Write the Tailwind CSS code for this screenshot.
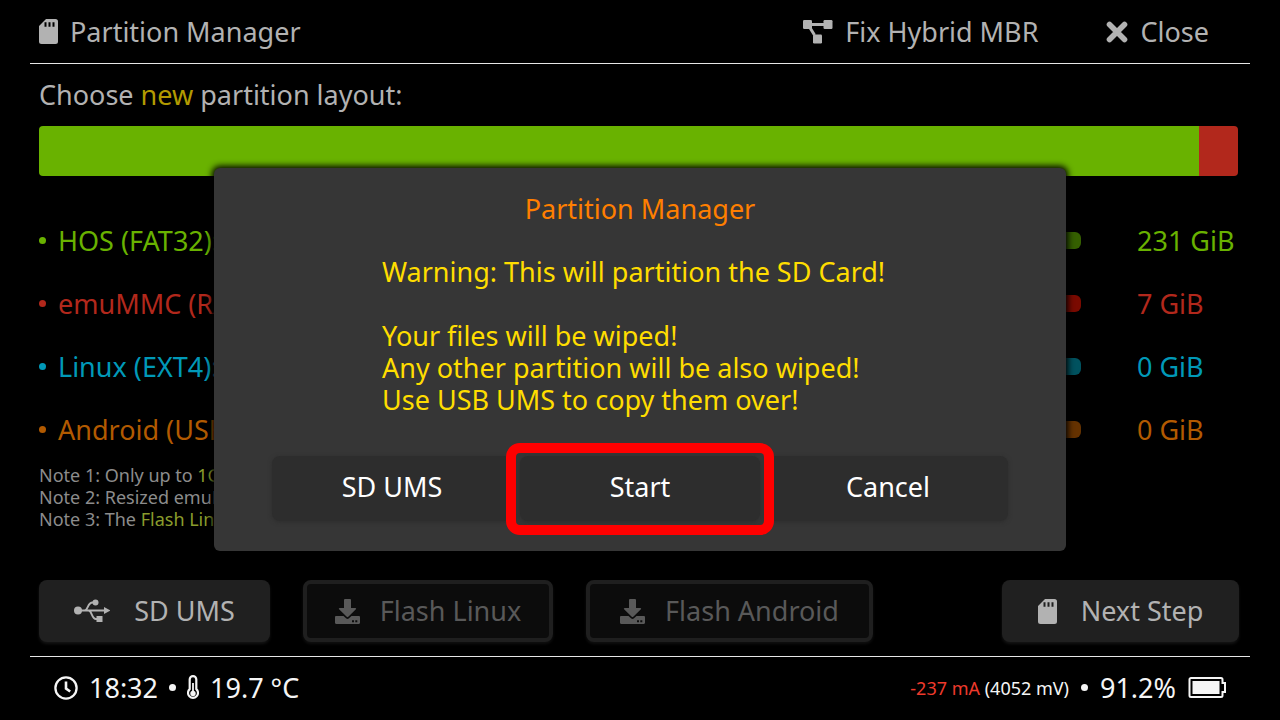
<!DOCTYPE html>
<html lang="en">
<head>
<meta charset="utf-8">
<meta name="viewport" content="width=device-width, initial-scale=1">
<title>Partition Manager</title>
<script src="https://cdn.jsdelivr.net/npm/@tailwindcss/browser@4"></script>
</head>
<body class="bg-black">
<svg class="hidden" aria-hidden="true">
  <symbol id="sd" viewBox="0 0 19 25"><path fill="currentColor" fill-rule="evenodd" d="M7 0h9.500a2.500 2.500 0 0 1 2.500 2.500v20a2.500 2.500 0 0 1-2.500 2.500h-14A2.500 2.500 0 0 1 0 22.500V7zM5.500 3.200v4.600h2V3.200zM9.500 3.200v4.600h2V3.200zM13.500 3.200v4.600h2V3.200z"/></symbol>
  <symbol id="download" viewBox="0 0 25 25"><path fill="currentColor" d="M10 0h5a1 1 0 0 1 1 1v8h4.300c.8 0 1.100.8.600 1.300l-7.600 7.500c-.5.500-1.100.5-1.600 0l-7.600-7.500C3.600 9.800 3.900 9 4.700 9H9V1a1 1 0 0 1 1-1z"/><path fill="currentColor" fill-rule="evenodd" d="M1.200 17h7.300l2.500 2.300c1 .9 2 .9 3 0l2.500-2.300h7.300c.7 0 1.200.5 1.200 1.200v5.600c0 .7-.5 1.200-1.200 1.200H1.200C.5 25 0 24.500 0 23.800v-5.600C0 17.500.5 17 1.200 17zM17 21.300v2h2v-2zM20.300 21.300v2h2v-2z"/></symbol>
</svg>
<div class="relative flex min-h-screen flex-col px-[30px] font-['Noto_Sans','Noto_Sans_CJK_JP',sans-serif] text-[27px] leading-8 font-normal text-[#b2b2b2]">

  <header class="flex h-16 items-center border-b border-[#e6e6e6] pr-[41px] pl-[9px] whitespace-nowrap">
    <h1 class="flex items-center gap-3">
      <svg class="h-[25px] w-[19px]"><use href="#sd"/></svg>Partition Manager
    </h1>
    <div class="ml-auto flex items-center gap-[68px]">
      <button type="button" class="flex items-center gap-3">
        <svg class="h-6 w-[30px]" viewBox="0 0 30 24"><g fill="currentColor"><rect width="9" height="9" rx="1.200"/><rect x="20.500" width="9" height="9" rx="1.200"/><rect x="10" y="14.500" width="9" height="9" rx="1.200"/></g><path d="M8 4.500h14M6.500 7l5 8" fill="none" stroke="currentColor" stroke-width="3"/></svg>
        Fix Hybrid MBR
      </button>
      <button type="button" class="flex items-center gap-3">
        <svg class="h-[22px] w-[22px]" viewBox="0 0 22 22"><path d="M3.500 3.500l15 15M18.500 3.500l-15 15" stroke="currentColor" stroke-width="5.600" stroke-linecap="round"/></svg>
        Close
      </button>
    </div>
  </header>

  <main class="flex grow flex-col pr-3 pl-[9px]">
    <p class="py-[15px]">Choose <span class="text-[#b29a00]">new</span> partition layout:</p>
    <div class="flex h-[50px] overflow-hidden rounded">
      <div class="grow bg-[#69b200]"></div>
      <div class="w-[39px] bg-[#b2281c]"></div>
    </div>

    <div class="mt-[33px]">
      <div class="flex h-[63px] items-center whitespace-nowrap text-[#69b200]">
        <label for="hos" class="flex w-[360px] items-center gap-3"><span class="size-[7px] rounded-full bg-current"></span>HOS (FAT32):</label>
        <input id="hos" type="range" min="0" max="238" value="100" class="h-[17px] min-w-0 grow appearance-none rounded-md bg-[#356000] [&::-webkit-slider-thumb]:size-[17px] [&::-webkit-slider-thumb]:appearance-none [&::-webkit-slider-thumb]:rounded-md [&::-webkit-slider-thumb]:bg-[#69b200]">
        <output for="hos" class="ml-14 w-[101px]">231 GiB</output>
      </div>
      <div class="flex h-[63px] items-center whitespace-nowrap text-[#b2281c]">
        <label for="emu" class="flex w-[360px] items-center gap-3"><span class="size-[7px] rounded-full bg-current"></span>emuMMC (RAW):</label>
        <input id="emu" type="range" min="0" max="238" value="7" class="h-[17px] min-w-0 grow appearance-none rounded-md bg-[#7a0a00] [&::-webkit-slider-thumb]:size-[17px] [&::-webkit-slider-thumb]:appearance-none [&::-webkit-slider-thumb]:rounded-md [&::-webkit-slider-thumb]:bg-[#b2281c]">
        <output for="emu" class="ml-14 w-[101px]">7 GiB</output>
      </div>
      <div class="flex h-[63px] items-center whitespace-nowrap text-[#0099b8]">
        <label for="linux" class="flex w-[360px] items-center gap-3"><span class="size-[7px] rounded-full bg-current"></span>Linux (EXT4):</label>
        <input id="linux" type="range" min="0" max="238" value="0" class="h-[17px] min-w-0 grow appearance-none rounded-md bg-[#00525f] [&::-webkit-slider-thumb]:size-[17px] [&::-webkit-slider-thumb]:appearance-none [&::-webkit-slider-thumb]:rounded-md [&::-webkit-slider-thumb]:bg-[#0099b8]">
        <output for="linux" class="ml-14 w-[101px]">0 GiB</output>
      </div>
      <div class="flex h-[63px] items-center whitespace-nowrap text-[#b25a00]">
        <label for="android" class="flex w-[360px] items-center gap-3"><span class="size-[7px] rounded-full bg-current"></span>Android (USER):</label>
        <input id="android" type="range" min="0" max="238" value="0" class="h-[17px] min-w-0 grow appearance-none rounded-md bg-[#653200] [&::-webkit-slider-thumb]:size-[17px] [&::-webkit-slider-thumb]:appearance-none [&::-webkit-slider-thumb]:rounded-md [&::-webkit-slider-thumb]:bg-[#b25a00]">
        <output for="android" class="ml-14 w-[101px]">0 GiB</output>
      </div>
    </div>

    <div class="mt-[3px] text-[18px] leading-[22px] text-[#8c8c8c]">
      <p>Note 1: Only up to <span class="text-[#8a9c2c]">1GB</span></p>
      <p>Note 2: Resized emuMMC</p>
      <p>Note 3: The <span class="text-[#8a9c2c]">Flash Linux</span></p>
    </div>

    <div class="mt-auto -mr-px mb-[14px] flex flex-wrap items-center gap-[33px] whitespace-nowrap">
      <button type="button" class="flex h-[62px] w-[231px] items-center justify-center gap-6 rounded-lg bg-[#202020] shadow-[0_2px_3px_#141414]">
        <svg class="h-6 w-9" viewBox="0 0 36 24"><g fill="currentColor"><circle cx="4" cy="11.500" r="4"/><circle cx="21.500" cy="3.500" r="3"/><rect x="22.500" y="17" width="6" height="6"/><path d="M30 8l6.500 3.500L30 15z"/></g><path d="M4 11.500h27M10.500 11.500c3.500 0 3-8 8-8h2M14.500 11.500c3.500 0 3 8.500 7.500 8.500h1.500" fill="none" stroke="currentColor" stroke-width="1.900"/></svg>
        SD UMS
      </button>
      <button type="button" disabled class="flex h-[62px] w-[250px] items-center justify-center gap-5 rounded-lg border-4 border-[#1f1f1f] bg-[#0c0c0c] text-[#595959] shadow-[0_2px_3px_#101010]">
        <svg class="size-[25px]"><use href="#download"/></svg>Flash Linux
      </button>
      <button type="button" disabled class="flex h-[62px] w-[287px] items-center justify-center gap-5 rounded-lg border-4 border-[#1f1f1f] bg-[#0c0c0c] text-[#595959] shadow-[0_2px_3px_#101010]">
        <svg class="size-[25px]"><use href="#download"/></svg>Flash Android
      </button>
      <button type="button" class="ml-auto flex h-[62px] w-[237px] items-center justify-center gap-6 rounded-lg bg-[#202020] shadow-[0_2px_3px_#141414]">
        <svg class="h-[25px] w-[19px]"><use href="#sd"/></svg>Next Step
      </button>
    </div>
  </main>

  <footer class="flex h-16 items-center justify-between border-t border-[#e6e6e6] px-6 pb-0.5 whitespace-nowrap text-[#f5f5f5]">
    <div class="flex items-center gap-[11px]">
      <svg class="size-6" viewBox="0 0 24 24" fill="none" stroke="currentColor" stroke-width="2.300"><circle cx="12" cy="12" r="10.600"/><path d="M12 5.500v7l4.200 3" stroke-width="2.600"/></svg>
      <span>18:32</span>
      <span class="size-[7px] rounded-full bg-current"></span>
      <svg class="h-[25px] w-3" viewBox="0 0 12 25"><path d="M2.700 4.400a3.300 3.300 0 0 1 6.600 0v9.700a5 5 0 1 1-6.600 0z" fill="none" stroke="currentColor" stroke-width="2.200"/><circle cx="6" cy="18.500" r="2.700" fill="currentColor"/><path d="M6 8v10" stroke="currentColor" stroke-width="1.800"/></svg>
      <span>19.7 °C</span>
    </div>
    <div class="flex items-center gap-3">
      <span class="text-[18px]"><span class="text-[#ee3a2c]">-237 mA</span> (4052 mV)</span>
      <span class="size-[7px] rounded-full bg-current"></span>
      <span>91.2%</span>
      <svg class="h-[21px] w-[38px]" viewBox="0 0 38 21"><path d="M3 1h30a1.500 1.500 0 0 1 1.500 1.500V6H37v9h-2.500v3.500A1.500 1.500 0 0 1 33 20H3a1.500 1.500 0 0 1-1.500-1.500v-16A1.500 1.500 0 0 1 3 1z" fill="none" stroke="currentColor" stroke-width="2"/><rect x="4.500" y="4" width="27" height="13" fill="currentColor"/></svg>
    </div>
  </footer>

  <div class="absolute inset-x-0 top-0 flex justify-center pt-[168px]">
    <div role="dialog" aria-modal="true" aria-labelledby="dlg-title" class="w-full max-w-[852px] rounded-md bg-[#363636] px-[58px] pt-[25px] pb-[30px] shadow-[0_0_6px_2px_#000]">
      <h2 id="dlg-title" class="text-center text-[#ff7f00]">Partition Manager</h2>
      <div class="mx-auto mt-[31px] w-fit min-w-[516px] text-[#ffdd00]">
        <p>Warning: This will partition the SD Card!</p>
        <p class="mt-8">Your files will be wiped!</p>
        <p>Any other partition will be also wiped!</p>
        <p>Use USB UMS to copy them over!</p>
      </div>
      <div class="mt-10 grid grid-cols-3 gap-2 text-white">
        <button type="button" class="h-[65px] rounded-lg bg-[#2d2d2d] pb-1 shadow-[0_1px_4px_#2d2d2d]">SD UMS</button>
        <button type="button" class="relative h-[65px] rounded-lg bg-[#2d2d2d] pb-1 shadow-[0_1px_4px_#2d2d2d]">Start<span class="absolute -inset-x-[14px] -top-[13px] -bottom-[14px] rounded-[14px] border-10 border-[#ff0000]"></span></button>
        <button type="button" class="h-[65px] rounded-lg bg-[#2d2d2d] pb-1 shadow-[0_1px_4px_#2d2d2d]">Cancel</button>
      </div>
    </div>
  </div>
</div>
</body>
</html>
